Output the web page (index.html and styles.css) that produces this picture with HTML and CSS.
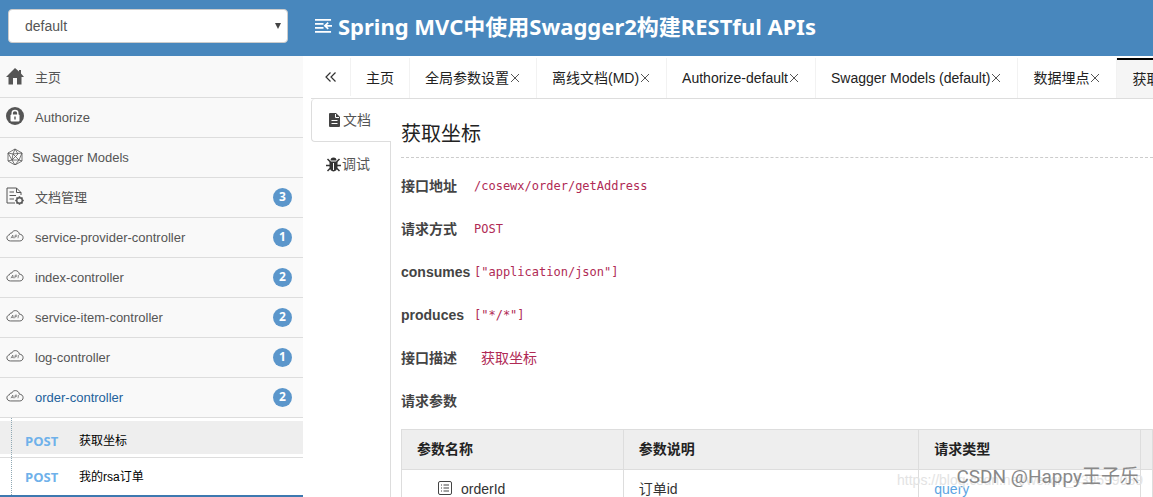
FILE: index.html
```html
<!DOCTYPE html>
<html lang="zh-CN">
<head>
<meta charset="utf-8">
<title>Spring MVC中使用Swagger2构建RESTful APIs</title>
<link rel="stylesheet" href="styles.css">
</head>
<body>
<svg class="defs" aria-hidden="true">
  <symbol id="cloud" viewBox="0 0 20 14">
    <path d="M5 12.5C2.500 12.500 1 11 1 9C1 7.200 2.200 6 3.700 5.900C3.800 4.400 5 3.500 6.300 3.800C7 2 8.500 1 10.300 1C12.800 1 14.600 2.700 14.800 5C17.300 5 19 6.600 19 8.800C19 11 17.500 12.500 15.400 12.500Z" fill="none" stroke="currentColor"/>
    <path d="M5.500 9.500L7.500 6L8.200 9.500M6.200 8.500H8M9.600 9.500L10.300 6H11.600Q12.600 6.200 12 7.300Q11.500 8 10 7.800M13.300 9.500L14 6" fill="none" stroke="currentColor" stroke-width=".7"/>
  </symbol>
</svg>
<div class="app">
  <header class="topbar">
    <div class="picker">
      <select class="group-select" aria-label="分组"><option>default</option></select>
    </div>
    <h1 class="title">
      <svg class="title-icon" viewBox="0 0 18 16" aria-hidden="true"><path d="M0 1.500H17M0 5.700H9M0 9.900H9M0 14.300H17M11 7.800H18M14 4.500L10.500 7.800L14 11" fill="none" stroke="#fff" stroke-width="1.800"/></svg>
      <span>Spring MVC中使用Swagger2构建RESTful APIs</span>
    </h1>
  </header>
  <div class="body">
    <nav class="sidebar">
      <a class="item first" href="#"><svg class="icon" viewBox="0 0 18 18"><path d="M9 1L13 4.600V3H15V6.500L18 10H15.500V17.500H11V11H7V17.500H2.500V10H0Z" fill="currentColor"/></svg><span>主页</span></a>
      <a class="item" href="#"><svg class="icon" viewBox="0 0 18 18"><circle cx="9" cy="9" r="9" fill="currentColor"/><path d="M6.200 8V6Q6.200 3.500 9 3.500Q11.800 3.500 11.800 6V8" fill="none" stroke="#fff" stroke-width="1.400"/><rect x="4.500" y="7.500" width="9" height="7" rx="1" fill="#fff"/><path d="M9 9.500V12.500" stroke="currentColor" stroke-width="1.400"/></svg><span>Authorize</span></a>
      <a class="item close" href="#"><svg class="icon" viewBox="0 0 18 18" fill="none" stroke="currentColor"><path d="M9 2L16 6V14L9 18L2 14V6ZM2 6L7 7L16 6L13 13L9 18L6 13L2 6M9 2L7 7L13 13L16 14M7 7L6 13L2 14M6 13L13 13M9 2L12 7L6 13" stroke-width=".8"/></svg><span>Swagger Models</span></a>
      <a class="item" href="#"><svg class="icon" viewBox="0 0 18 18" fill="none" stroke="currentColor"><path d="M15 8V5.500L10.500 1H1V16H9M10.500 1V5.500H15M3.500 5H8M3.500 8.500H10M3.500 12H8"/><circle cx="13.500" cy="13.500" r="2.800" stroke-width="1.400"/><path d="M13.500 9.200V10.500M13.500 16.500V17.800M9.200 13.500H10.500M16.500 13.500H17.800M10.500 10.500L11.400 11.400M15.600 15.600L16.500 16.500M16.500 10.500L15.600 11.400M10.500 16.500L11.400 15.600" stroke-width="1.600"/></svg><span>文档管理</span><b class="badge">3</b></a>
      <a class="item" href="#"><svg class="icon"><use href="#cloud"/></svg><span>service-provider-controller</span><b class="badge">1</b></a>
      <a class="item" href="#"><svg class="icon"><use href="#cloud"/></svg><span>index-controller</span><b class="badge">2</b></a>
      <a class="item" href="#"><svg class="icon"><use href="#cloud"/></svg><span>service-item-controller</span><b class="badge">2</b></a>
      <a class="item" href="#"><svg class="icon"><use href="#cloud"/></svg><span>log-controller</span><b class="badge">1</b></a>
      <a class="item open" href="#"><svg class="icon"><use href="#cloud"/></svg><span>order-controller</span><b class="badge">2</b></a>
      <div class="submenu">
        <a class="sub current" href="#"><b class="method">POST</b><span>获取坐标</span></a>
        <a class="sub" href="#"><b class="method">POST</b><span>我的rsa订单</span></a>
      </div>
    </nav>
    <main class="main">
      <div class="tabs">
        <button class="tab fold" aria-label="收起"><svg viewBox="0 0 12 10"><path d="M5.500 0.500L1 5L5.500 9.500M10.500 0.500L6 5L10.500 9.500" fill="none" stroke="#333" stroke-width="1.200"/></svg></button>
        <button class="tab">主页</button>
        <button class="tab">全局参数设置<svg class="x" viewBox="0 0 10 10"><path d="M1 1L9 9M9 1L1 9"/></svg></button>
        <button class="tab">离线文档(MD)<svg class="x" viewBox="0 0 10 10"><path d="M1 1L9 9M9 1L1 9"/></svg></button>
        <button class="tab">Authorize-default<svg class="x" viewBox="0 0 10 10"><path d="M1 1L9 9M9 1L1 9"/></svg></button>
        <button class="tab">Swagger Models (default)<svg class="x" viewBox="0 0 10 10"><path d="M1 1L9 9M9 1L1 9"/></svg></button>
        <button class="tab">数据埋点<svg class="x" viewBox="0 0 10 10"><path d="M1 1L9 9M9 1L1 9"/></svg></button>
        <button class="tab active">获取坐标<svg class="x" viewBox="0 0 10 10"><path d="M1 1L9 9M9 1L1 9"/></svg></button>
      </div>
      <div class="panel">
        <div class="side-tabs">
          <button class="side-tab selected"><svg class="doc" viewBox="0 0 11 14"><path d="M1 0H7L11 4V13Q11 14 10 14H1Q0 14 0 13V1Q0 0 1 0Z" fill="#444"/><path d="M6.500 1V4.500H10M2.500 7.500H8.500M2.500 10.500H8.500" fill="none" stroke="#fff"/></svg>文档</button>
          <button class="side-tab"><svg class="bug" viewBox="0 0 15 15"><path d="M4.500 3.500Q4.500 0.500 7.500 0.500Q10.500 0.500 10.500 3.500ZM3.500 4.500H11.500V10Q11 14 7.500 14.500Q4 14 3.500 10Z" fill="#333"/><path d="M1.500 2L4.500 5M13.500 2L10.500 5M0 8.500H4M11 8.500H15M1.500 14L4.500 11M13.500 14L10.500 11" stroke="#333" stroke-width="1.500"/><path d="M7.500 6V13" stroke="#fff"/></svg>调试</button>
        </div>
        <section class="content">
          <h2 class="heading">获取坐标</h2>
          <dl class="facts">
            <dt>接口地址</dt><dd>/cosewx/order/getAddress</dd>
            <dt>请求方式</dt><dd>POST</dd>
            <dt>consumes</dt><dd>["application/json"]</dd>
            <dt>produces</dt><dd>["*/*"]</dd>
            <dt>接口描述</dt><dd class="desc">获取坐标</dd>
            <dt>请求参数</dt><dd></dd>
          </dl>
          <table class="params">
            <thead><tr><th>参数名称</th><th class="wide">参数说明</th><th>请求类型</th><th class="rest"></th></tr></thead>
            <tbody><tr><td class="name"><svg class="leaf" viewBox="0 0 14 14"><rect x=".5" y=".5" width="13" height="13" rx="1.500" fill="none" stroke="#444"/><path d="M3 4H4M5.500 4H11M3 7H4M5.500 7H11M3 10H4M5.500 10H11" stroke="#444"/></svg>orderId</td><td>订单id</td><td class="type">query</td><td></td></tr></tbody>
          </table>
        </section>
      </div>
    </main>
  </div>
  <div class="mark-url">https://blog.csdn.net/weixin_439599089</div>
  <div class="mark">CSDN @Happy王子乐</div>
</div>
</body>
</html>
```
FILE: styles.css
```css
* { box-sizing: border-box; }
body {
  margin: 0;
  background: #fff;
  color: #333;
  font: 14px/20px "Liberation Sans", "Noto Sans CJK SC", sans-serif;
}
a { color: inherit; text-decoration: none; }
button { font: inherit; color: inherit; background: none; border: 0; padding: 0; }
svg { flex: none; }
.defs { position: absolute; width: 0; height: 0; }
.app { position: relative; display: flex; flex-direction: column; height: 100vh; overflow: hidden; }

.topbar { display: flex; flex: none; height: 56px; background: #4887bd; }
.picker { position: relative; flex: none; width: 304px; padding: 9px 16px 0 8px; }
.picker::after {
  content: "";
  position: absolute;
  right: 23px;
  top: 23px;
  border: 3px solid transparent;
  border-top: 6px solid #444;
  border-bottom: 0;
}
.group-select {
  appearance: none;
  width: 100%;
  height: 34px;
  padding: 0 16px;
  border: 1px solid #ccc;
  border-radius: 4px;
  background: #fff;
  color: #555;
  font: inherit;
}
.title {
  display: flex;
  align-items: center;
  gap: 6px;
  margin: 0;
  padding: 0 0 4px 11px;
  color: #fff;
  font: bold 22px/32px "Noto Sans", "Noto Sans CJK SC", sans-serif;
  white-space: nowrap;
}
.title-icon { width: 17px; height: 16px; }

.body { display: flex; flex: 1; min-height: 0; }
.sidebar { flex: none; width: 303px; }
.item {
  display: flex;
  align-items: center;
  gap: 11px;
  height: 40px;
  padding: 0 11px 0 6px;
  border-bottom: 1px solid #ddd;
  background: #f9f9f9;
  color: #555;
  font-size: 13px;
}
.first { height: 42px; padding-top: 2px; }
.close { gap: 8px; }
.open { color: #23619b; }
.icon { width: 18px; height: 18px; color: #555; margin-bottom: 3px; }
.badge {
  width: 19px;
  height: 19px;
  margin-left: auto;
  border-radius: 50%;
  background: #5b96cb;
  color: #fff;
  font: bold 12px/17px "Open Sans", sans-serif;
  text-align: center;
}
.submenu { position: relative; padding-top: 3px; border-bottom: 2px solid #3d79b0; }
.submenu::before {
  content: "";
  position: absolute;
  left: 11px;
  top: 0;
  bottom: 0;
  border-left: 1px dotted #8fa8b4;
}
.sub {
  display: flex;
  align-items: center;
  height: 37px;
  color: #000;
  padding-left: 25px;
  font-size: 12px;
}
.current { padding-top: 3px; border-bottom: 1px solid #ddd; background: linear-gradient(#eee, #eee) no-repeat 0 0 / 100% 33px; }
.method { width: 54px; color: #6fb1ea; font: bold 13px/20px "Open Sans", sans-serif; }

.main { flex: 1; min-width: 0; padding-left: 8px; }
.tabs { display: flex; height: 43px; padding-top: 2px; border-bottom: 1px solid #ddd; overflow: hidden; }
.tab {
  display: flex;
  flex: none;
  align-items: center;
  padding: 0 15px;
  border-right: 1px solid #f2f2f2;
  color: #222;
  white-space: nowrap;
}
.fold { padding: 0 13px 0 14px; margin-bottom: 2px; }
.fold svg { width: 12px; height: 10px; }
.x { width: 10px; height: 10px; margin: 0 1px; fill: none; stroke: #555; }
.active { border-top: 2px solid #000; background: #f5f5f5; }

.panel { display: flex; }
.side-tabs {
  display: flex;
  flex-direction: column;
  flex: none;
  width: 80px;
  height: 400px;
  border-right: 1px solid #ddd;
}
.side-tab { display: flex; align-items: center; justify-content: center; height: 44px; color: #555; gap: 1px; padding-right: 5px; }
.selected { height: 43px; margin-right: -1px; padding: 0 3px 0 0; gap: 3px; border: 1px solid #ddd; border-width: 0 0 1px 1px; border-radius: 4px 0 0 4px; background: #fff; }
.doc { width: 11px; height: 14px; }
.bug { width: 15px; height: 15px; }
.content { flex: 1; min-width: 0; padding-left: 10px; }
.heading {
  margin: 0;
  padding: 20px 0 8px;
  border-bottom: 1px dashed #ccc;
  color: #222;
  font-weight: 400;
  font-size: 20px;
  line-height: 30px;
}
.facts { display: grid; grid-template-columns: 73px 1fr; grid-auto-rows: 43px; align-items: center; margin: 0; padding-top: 6px; color: #444; }
.facts dt { font-weight: bold; }
.facts dd { margin: 0; color: #b02a55; font: 12px/20px "DejaVu Sans Mono", "Noto Sans CJK SC", monospace; }
.facts .desc { padding-left: 7px; font-size: 14px; }
.params { width: 100%; table-layout: fixed; margin-top: 7px; border-collapse: collapse; }
.params th, .params td { height: 40px; padding: 0 15px 2px; border: 1px solid #ddd; text-align: left; }
.params th { width: 30%; background: #eee; color: #222; }
.params .wide { width: 40%; }
.params .rest { width: 12px; padding: 0; }
.params .name { padding-left: 36px; }
.leaf { width: 14px; height: 14px; margin-right: 9px; vertical-align: -1px; }
.params .type { color: #5ba4e2; }

.mark, .mark-url { position: absolute; right: 14px; bottom: 7px; white-space: nowrap; }
.mark { color: #888; font-size: 19px; line-height: 26px; font-family: Roboto, "Noto Sans CJK SC", sans-serif; }
.mark-url { color: #e3e3e3; right: 10px; }
```
